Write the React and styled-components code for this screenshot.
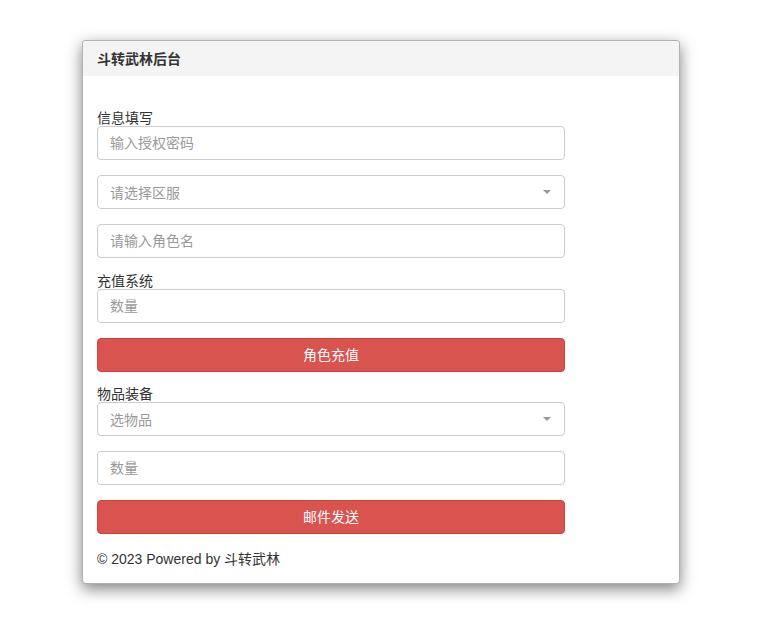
import React from "react";
import styled, { createGlobalStyle } from "styled-components";

const GlobalStyle = createGlobalStyle`
  html, body {
    margin: 0;
    background: #fff;
  }
  body {
    font-family: "Liberation Sans", Arial, "Noto Sans CJK SC", sans-serif;
    font-size: 14px;
    color: #333;
  }
  * {
    box-sizing: border-box;
  }
`;

const Page = styled.div`
  padding: 40px 0 48px 82px;
`;

const Card = styled.div`
  width: 598px;
  background: #fff;
  border: 1px solid rgba(0, 0, 0, 0.3);
  border-radius: 4px;
  box-shadow: 0 5px 15px rgba(0, 0, 0, 0.5);
  overflow: hidden;
`;

const Header = styled.div`
  height: 35px;
  background: #f4f4f4;
  padding: 0 14px 1px;
  display: flex;
  align-items: center;
  font-weight: bold;
  font-size: 14px;
  color: #333;
  font-family: "Noto Sans CJK SC", sans-serif;
`;

const Body = styled.div`
  padding: 34px 14px 14px;
`;

const Form = styled.form`
  width: 468px;
  display: flex;
  flex-direction: column;
`;

const Label = styled.label`
  display: block;
  height: 16px;
  line-height: 14px;
  font-size: 14px;
  color: #333;
  font-family: "Noto Sans CJK SC", sans-serif;
`;

const Field = styled.div`
  margin-bottom: 15px;
`;

const Input = styled.input`
  display: block;
  width: 100%;
  height: 34px;
  padding: 0 12px 2px;
  border: 1px solid #ccc;
  border-radius: 4px;
  font-size: 14px;
  font-family: "Noto Sans CJK SC", sans-serif;
  color: #555;
  outline: none;
  &::placeholder {
    color: #999;
  }
`;

const Select = styled.div`
  display: flex;
  align-items: center;
  justify-content: space-between;
  height: 34px;
  padding: 0 13px 1px 12px;
  border: 1px solid #ccc;
  border-radius: 4px;
  font-size: 14px;
  font-family: "Noto Sans CJK SC", sans-serif;
  color: #999;
  cursor: pointer;
`;

const Caret = styled.span`
  width: 0;
  height: 0;
  border-left: 4px solid transparent;
  border-right: 4px solid transparent;
  border-top: 4px solid #999;
`;

const Button = styled.button`
  display: block;
  width: 100%;
  height: 34px;
  padding: 0 0 2px;
  border: 1px solid #d43f3a;
  border-radius: 4px;
  background: #d9534f;
  color: #fff;
  font-size: 14px;
  font-family: "Noto Sans CJK SC", sans-serif;
  cursor: pointer;
  margin-bottom: ${(p) => (p.$tight ? "14px" : "15px")};
`;

const Footer = styled.div`
  height: 20px;
  line-height: 20px;
  font-size: 14px;
  color: #333;
  font-family: "Liberation Sans", Arial, "Noto Sans CJK SC", sans-serif;
`;

function Dropdown({ placeholder }) {
  return (
    <Select>
      <span>{placeholder}</span>
      <Caret />
    </Select>
  );
}

export default function App() {
  return (
    <>
      <GlobalStyle />
      <Page>
        <Card>
          <Header>斗转武林后台</Header>
          <Body>
            <Form onSubmit={(e) => e.preventDefault()}>
              <Label>信息填写</Label>
              <Field>
                <Input placeholder="输入授权密码" />
              </Field>
              <Field>
                <Dropdown placeholder="请选择区服" />
              </Field>
              <Field>
                <Input placeholder="请输入角色名" />
              </Field>

              <Label>充值系统</Label>
              <Field>
                <Input placeholder="数量" />
              </Field>
              <Button type="button" $tight>
                角色充值
              </Button>

              <Label>物品装备</Label>
              <Field>
                <Dropdown placeholder="选物品" />
              </Field>
              <Field>
                <Input placeholder="数量" />
              </Field>
              <Button type="button">邮件发送</Button>

              <Footer>© 2023 Powered by 斗转武林</Footer>
            </Form>
          </Body>
        </Card>
      </Page>
    </>
  );
}
